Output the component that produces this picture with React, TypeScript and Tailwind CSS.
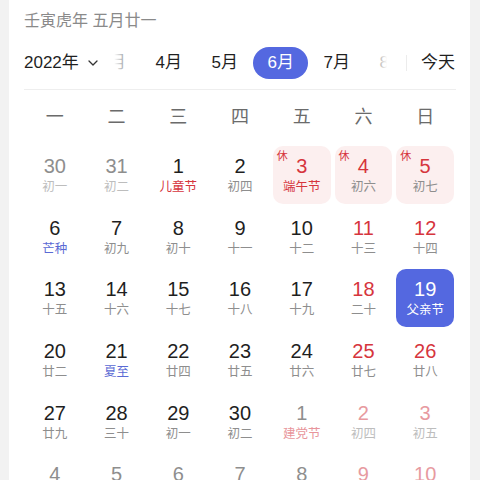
import React from 'react'

type Cell = {
    d: number
    l: string
    dc: string
    lc: string
    rest?: boolean
    sel?: boolean
}

const BLACK = 'text-[#1f1f1f]'
const GRAY = 'text-[#8e8e8e]'
const RED = 'text-[#d6353d]'
const PINK = 'text-[#e79aa0]'
const LUNAR = 'text-[#8e8e8e]'
const FADED = 'text-[#bdbdbd]'
const BLUE = 'text-[#5a6ad4]'

const c = (d: number, l: string, dc = BLACK, lc = LUNAR, extra: Partial<Cell> = {}): Cell => ({ d, l, dc, lc, ...extra })

const weeks: Cell[][] = [
    [
        c(30, '初一', GRAY, FADED),
        c(31, '初二', GRAY, FADED),
        c(1, '儿童节', BLACK, RED),
        c(2, '初四'),
        c(3, '端午节', RED, RED, { rest: true }),
        c(4, '初六', RED, LUNAR, { rest: true }),
        c(5, '初七', RED, LUNAR, { rest: true }),
    ],
    [
        c(6, '芒种', BLACK, BLUE),
        c(7, '初九'),
        c(8, '初十'),
        c(9, '十一'),
        c(10, '十二'),
        c(11, '十三', RED),
        c(12, '十四', RED),
    ],
    [
        c(13, '十五'),
        c(14, '十六'),
        c(15, '十七'),
        c(16, '十八'),
        c(17, '十九'),
        c(18, '二十', RED),
        c(19, '父亲节', BLACK, LUNAR, { sel: true }),
    ],
    [
        c(20, '廿二'),
        c(21, '夏至', BLACK, BLUE),
        c(22, '廿四'),
        c(23, '廿五'),
        c(24, '廿六'),
        c(25, '廿七', RED),
        c(26, '廿八', RED),
    ],
    [
        c(27, '廿九'),
        c(28, '三十'),
        c(29, '初一'),
        c(30, '初二'),
        c(1, '建党节', GRAY, 'text-[#e8959b]'),
        c(2, '初四', PINK, FADED),
        c(3, '初五', PINK, FADED),
    ],
    [
        c(4, '初六', GRAY, FADED),
        c(5, '初七', GRAY, FADED),
        c(6, '初八', GRAY, FADED),
        c(7, '初九', GRAY, FADED),
        c(8, '初十', GRAY, FADED),
        c(9, '十一', PINK, FADED),
        c(10, '十二', PINK, FADED),
    ],
]

const weekdays = ['一', '二', '三', '四', '五', '六', '日']
const months = ['3月', '4月', '5月', '6月', '7月', '8月']

const DayCell: React.FC<{ cell: Cell }> = ({ cell }) => {
    let box = 'relative flex flex-col items-center justify-center w-[57.7px] h-[58px] rounded-[10px]'
    if (cell.rest) box += ' bg-[#fcefef]'
    if (cell.sel) box += ' bg-[#5468e0]'
    return (
        <div className="flex items-center justify-center h-[61.7px]">
            <div className={box}>
                {cell.rest && (
                    <span className="absolute left-[4px] top-[3px] text-[11px] leading-[14px] text-[#d6353d]">休</span>
                )}
                <span className={`text-[20px] leading-[22px] ${cell.sel ? 'text-white' : cell.dc}`}>{cell.d}</span>
                <span className={`mt-[2px] text-[12.5px] leading-[16px] ${cell.sel ? 'text-white' : cell.lc}`}>{cell.l}</span>
            </div>
        </div>
    )
}

export default function App() {
    return (
        <div
            className="w-[480px] h-[480px] overflow-hidden bg-[#f2f2f2] pl-[9px] pr-[10px]"
            style={{ fontFamily: '"Liberation Sans", "Noto Sans CJK SC", sans-serif' }}
        >
            <div className="h-full bg-white pl-[15px] pr-[14px] pt-[9px]">
                {/* lunar date */}
                <div className="text-[16px] leading-[24px] text-[#8a8a8a]">壬寅虎年 五月廿一</div>

                {/* month tabs */}
                <div className="mt-[14px] flex items-center h-[32px]">
                    <span className="text-[17px] text-[#1f1f1f]">2022年</span>
                    <svg className="ml-[9px]" width="10" height="6" viewBox="0 0 10 6" fill="none">
                        <path d="M1 1l4 4 4-4" stroke="#333" strokeWidth="1.3" strokeLinecap="round" strokeLinejoin="round" />
                    </svg>
                    <div className="relative ml-[3px] flex-1 h-[32px] overflow-hidden">
                        <div className="flex h-full ml-[-16px]">
                            {months.map((m) => (
                                <div key={m} className="w-[56px] shrink-0 flex items-center justify-center">
                                    {m === '6月' ? (
                                        <span className="w-[55px] h-[32px] rounded-full bg-[#5468e0] text-white text-[17px] flex items-center justify-center">
                                            {m}
                                        </span>
                                    ) : (
                                        <span className="text-[17px] text-[#1f1f1f]">{m}</span>
                                    )}
                                </div>
                            ))}
                        </div>
                        <div className="absolute left-0 top-0 h-full w-[38px] bg-linear-to-r from-white from-35% to-white/0" />
                        <div className="absolute right-0 top-0 h-full w-[42px] bg-linear-to-l from-white from-45% to-white/0" />
                    </div>
                    <div className="w-px h-[16px] bg-[#ececec]" />
                    <span className="ml-[14px] mr-px text-[17px] text-[#1f1f1f]">今天</span>
                </div>

                <div className="mt-[10px] h-px bg-[#eeeeee]" />

                {/* weekday header */}
                <div className="grid grid-cols-7 h-[54px] items-center">
                    {weekdays.map((w) => (
                        <div key={w} className="text-center text-[18px] text-[#6b6b6b]">{w}</div>
                    ))}
                </div>

                {/* days */}
                <div className="grid grid-cols-7">
                    {weeks.flat().map((cell, i) => (
                        <DayCell key={i} cell={cell} />
                    ))}
                </div>
            </div>
        </div>
    )
}
